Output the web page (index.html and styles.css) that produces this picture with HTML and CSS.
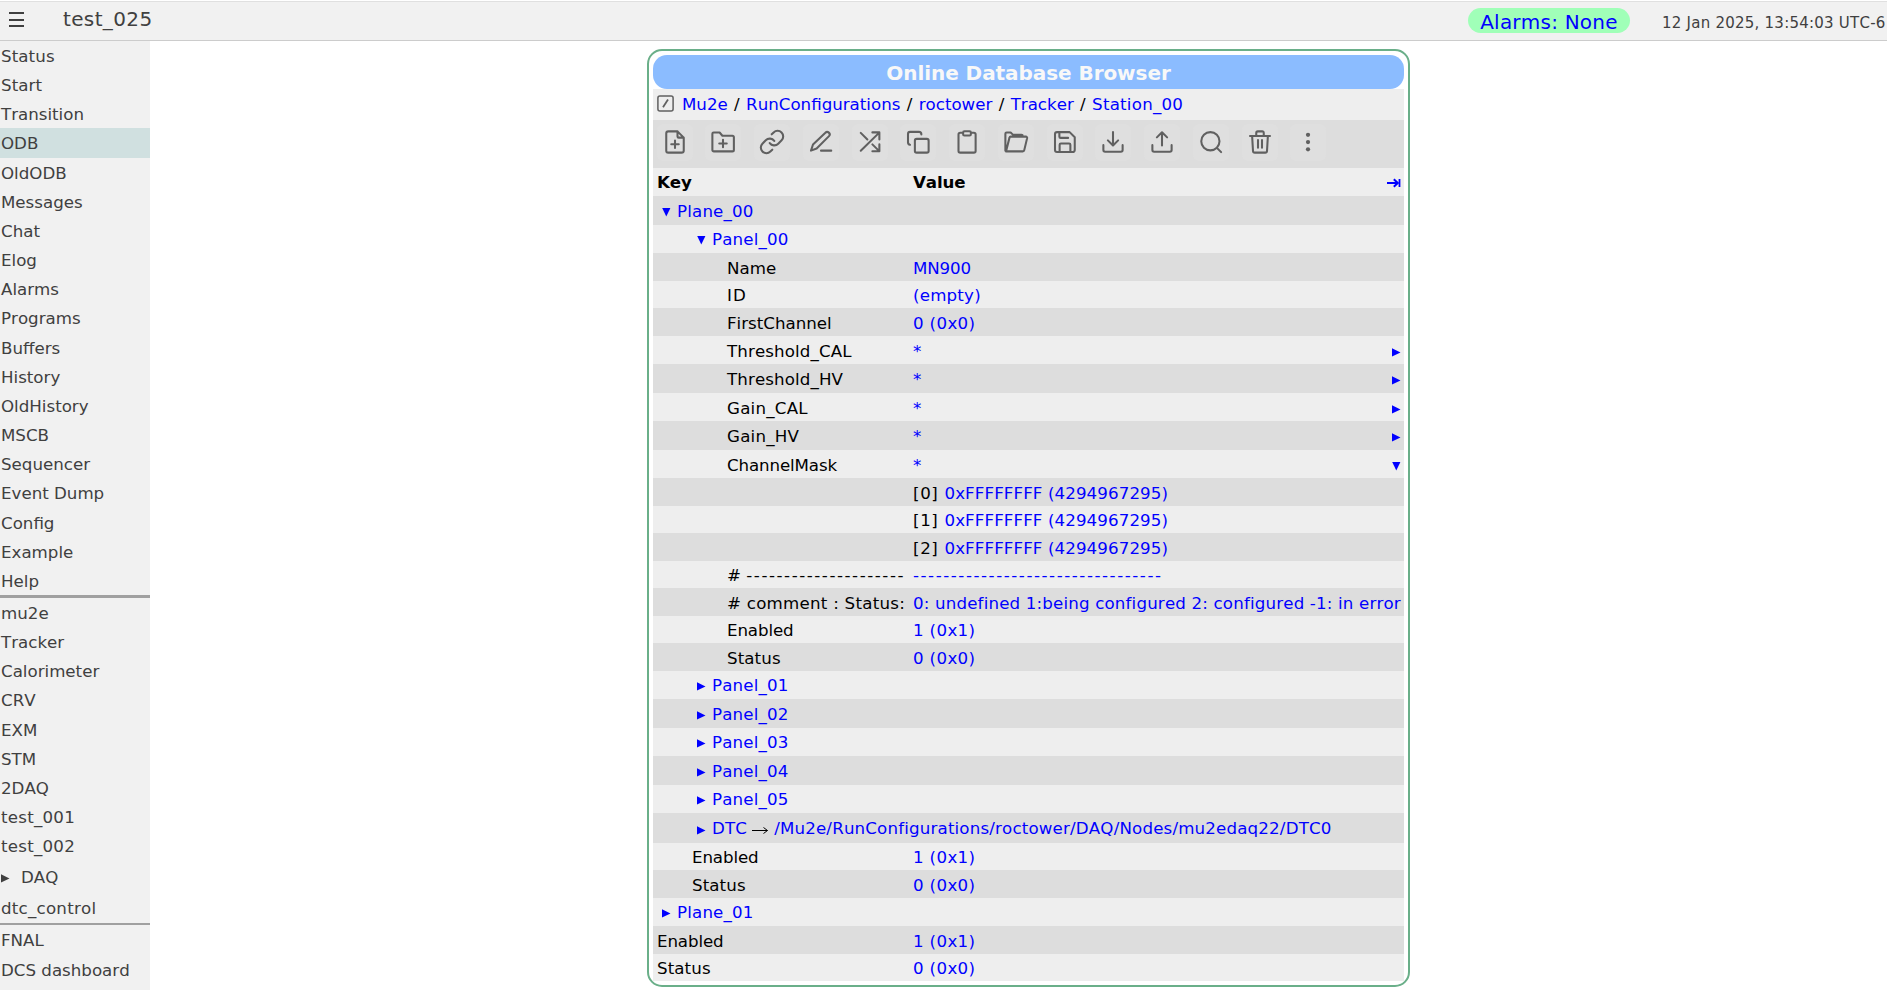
FILE: index.html
```html
<!DOCTYPE html>
<html lang="en">
<head>
<meta charset="utf-8">
<title>test_025 - Online Database Browser</title>
<link rel="stylesheet" href="styles.css">
</head>
<body>
<header class="topbar">
  <span class="menu-icon"><svg width="16" height="16" viewBox="0 0 16 16"><path d="M0 1h15M0 8h15M0 14h15" stroke="#404040" stroke-width="1.8"/></svg></span>
  <span class="experiment">test_025</span>
  <span class="alarms">Alarms: None</span>
  <span class="clock">12 Jan 2025, 13:54:03 UTC-6</span>
</header>
<div class="page">
<nav class="sidebar">
  <a class="item cap-s">Status</a>
  <a class="item cap-s">Start</a>
  <a class="item">Transition</a>
  <a class="item current">ODB</a>
  <a class="item">OldODB</a>
  <a class="item">Messages</a>
  <a class="item">Chat</a>
  <a class="item">Elog</a>
  <a class="item">Alarms</a>
  <a class="item">Programs</a>
  <a class="item">Buffers</a>
  <a class="item">History</a>
  <a class="item">OldHistory</a>
  <a class="item">MSCB</a>
  <a class="item">Sequencer</a>
  <a class="item">Event Dump</a>
  <a class="item">Config</a>
  <a class="item">Example</a>
  <a class="item">Help</a>
  <div class="rule thick"></div>
  <a class="item">mu2e</a>
  <a class="item">Tracker</a>
  <a class="item">Calorimeter</a>
  <a class="item">CRV</a>
  <a class="item">EXM</a>
  <a class="item">STM</a>
  <a class="item">2DAQ</a>
  <a class="item under">test_001</a>
  <a class="item under">test_002</a>
  <a class="item group"><svg class="tri" width="9" height="9" viewBox="0 0 9 9"><path d="M0 .3L8.5 4.4 0 8.5z"/></svg>DAQ</a>
  <a class="item under">dtc_control</a>
  <div class="rule"></div>
  <a class="item">FNAL</a>
  <a class="item last">DCS dashboard</a>
</nav>
<main class="main">
<section class="card">
  <h1 class="title">Online Database Browser</h1>
  <div class="path">
    <svg class="root" width="17" height="17" viewBox="0 0 17 17" fill="none" stroke="#606060" stroke-width="1.5"><rect x=".9" y=".9" width="15.2" height="15.2" rx="2"/><path d="M6 12.3L11 4.5" stroke-width="1.8"/></svg>
    <a>Mu2e</a><i>/</i><a>RunConfigurations</a><i>/</i><a>roctower</a><i>/</i><a>Tracker</a><i>/</i><a class="under">Station_00</a>
  </div>
  <div class="toolbar">
    <span class="tool"><svg viewBox="0 0 24 24"><path d="M14 3.5v4a1 1 0 0 0 1 1h4M17.2 20.5H6.6a1.6 1.6 0 0 1-1.6-1.6V5.1a1.6 1.6 0 0 1 1.6-1.6H14l5 5v10.2a1.8 1.8 0 0 1-1.8 1.8zM12 10.8v6M9 13.8h6"/></svg></span>
    <span class="tool"><svg viewBox="0 0 24 24"><path d="M3.5 18.3V5.4a1 1 0 0 1 1-1H9.3L11.5 7h8a1.2 1.2 0 0 1 1.2 1.2v10.1a1.2 1.2 0 0 1-1.2 1.2H4.7a1.2 1.2 0 0 1-1.2-1.2zM12 10.2v6M9 13.2h6"/></svg></span>
    <span class="tool"><svg viewBox="0 0 24 24"><g transform="translate(1.2 1.2) scale(.9)" stroke-width="1.85"><path d="M10 13a5 5 0 0 0 7.54.54l3-3a5 5 0 0 0-7.07-7.07l-1.72 1.71M14 11a5 5 0 0 0-7.54-.54l-3 3a5 5 0 0 0 7.07 7.07l1.71-1.71"/></g></svg></span>
    <span class="tool"><svg viewBox="0 0 24 24"><path d="M4 18.9l1.6-4.9 9.9-9.4a1.9 1.9 0 0 1 2.9 2.7L8.5 17.2zM12 18.9h8.2"/></svg></span>
    <span class="tool"><svg viewBox="0 0 24 24"><path d="M4.6 19L19.4 4.5M13.9 4.3h5.6v5.6M4.6 4.7l5.3 5.3M13.9 13.9l5.5 5.4M19.5 13.8v5.6h-5.6"/></svg></span>
    <span class="tool"><svg viewBox="0 0 24 24"><rect x="9.5" y="9.5" width="11" height="11" rx="1.4"/><path d="M5.6 14.2A2 2 0 0 1 4 12.3V5.5A1.6 1.6 0 0 1 5.6 3.9h7.1A2 2 0 0 1 14.7 5.9"/></svg></span>
    <span class="tool"><svg viewBox="0 0 24 24"><path d="M9 4.6H6.6A1.4 1.4 0 0 0 5.2 6v13.1a1.4 1.4 0 0 0 1.4 1.4h10.9a1.4 1.4 0 0 0 1.4-1.4V6a1.4 1.4 0 0 0-1.4-1.4H15M9.9 3.4h4.2a1 1 0 0 1 1 1v1.4a1 1 0 0 1-1 1H9.9a1 1 0 0 1-1-1V4.4a1 1 0 0 1 1-1z"/></svg></span>
    <span class="tool"><svg viewBox="0 0 24 24"><path d="M3.5 19V5.4a1 1 0 0 1 1-1H7.7l2 1.9h6.7a1 1 0 0 1 1 1v.3M4 19.5L6.8 8.5a1 1 0 0 1 1-.8H19.9a1 1 0 0 1 1 1.2L18.6 18.5a1.2 1.2 0 0 1-1.2 1H4z"/></svg></span>
    <span class="tool"><svg viewBox="0 0 24 24"><path d="M5.6 4.1H15.7L19.8 8.2V18.4a1.6 1.6 0 0 1-1.6 1.6H5.6A1.6 1.6 0 0 1 4 18.4V5.7a1.6 1.6 0 0 1 1.6-1.6zM7.7 20V14.2a1 1 0 0 1 1-1h6.6a1 1 0 0 1 1 1V20M7.5 4.1V7.7a1 1 0 0 0 1 1H14.5"/></svg></span>
    <span class="tool"><svg viewBox="0 0 24 24"><path d="M4.3 14.5v3.9a1.4 1.4 0 0 0 1.4 1.4h12.6a1.4 1.4 0 0 0 1.4-1.4v-3.9M12 4.1v10.5M7.9 10.7l4.1 4.1 4.1-4.1"/></svg></span>
    <span class="tool"><svg viewBox="0 0 24 24"><path d="M4.3 14.5v3.9a1.4 1.4 0 0 0 1.4 1.4h12.6a1.4 1.4 0 0 0 1.4-1.4v-3.9M12 14.8V4.3M7.9 8.3L12 4.2l4.1 4.1"/></svg></span>
    <span class="tool"><svg viewBox="0 0 24 24"><circle cx="11.5" cy="11.4" r="7.3"/><path d="M16.7 16.7l3.4 3.4"/></svg></span>
    <span class="tool"><svg viewBox="0 0 24 24"><path d="M4 7.2h16M9 7V4.7a1.2 1.2 0 0 1 1.2-1.2h3.6A1.2 1.2 0 0 1 15 4.7V7M5.7 7.2l.7 12a1.4 1.4 0 0 0 1.4 1.3h8.4a1.4 1.4 0 0 0 1.4-1.3l.7-12M10.4 10.5v6M13.6 10.5v6"/></svg></span>
    <span class="tool"><svg viewBox="0 0 24 24"><g fill="#606060" stroke="none"><circle cx="12" cy="6.2" r="1.7"/><circle cx="12" cy="12" r="1.7"/><circle cx="12" cy="17.8" r="1.7"/></g></svg></span>
  </div>
  <div class="row head"><span class="key">Key</span><span class="val">Value</span><span class="more"><svg width="14" height="10" viewBox="0 0 14 10" fill="none" stroke="#0000ff"><path d="M0 5h11" stroke-width="2"/><path d="M6.8 1.2L10.8 5 6.8 8.8" stroke-width="2"/><path d="M12.5 1v8" stroke-width="1.8"/></svg></span></div>
  <div class="row dark h29 low"><a class="key l0"><svg class="tri" width="9" height="9" viewBox="0 0 9 9"><path d="M.2 0h8.2L4.3 8.5z"/></svg>Plane_00</a></div>
  <div class="row h28"><a class="key l1"><svg class="tri" width="9" height="9" viewBox="0 0 9 9"><path d="M.2 0h8.2L4.3 8.5z"/></svg>Panel_00</a></div>
  <div class="row dark h28 low"><span class="key l2">Name</span><a class="val tight">MN900</a></div>
  <div class="row h27"><span class="key l2 serif-i">ID</span><a class="val empty">(empty)</a></div>
  <div class="row dark h28 low"><span class="key l2">FirstChannel</span><a class="val num">0 (0x0)</a></div>
  <div class="row h28 low"><span class="key l2 long">Threshold_CAL</span><a class="val">*</a><span class="more"><svg class="tri" width="9" height="9" viewBox="0 0 9 9"><path d="M0 .3L8.5 4.4 0 8.5z"/></svg></span></div>
  <div class="row dark h29 low"><span class="key l2 long">Threshold_HV</span><a class="val">*</a><span class="more"><svg class="tri" width="9" height="9" viewBox="0 0 9 9"><path d="M0 .3L8.5 4.4 0 8.5z"/></svg></span></div>
  <div class="row h28 low"><span class="key l2 under">Gain_CAL</span><a class="val">*</a><span class="more"><svg class="tri" width="9" height="9" viewBox="0 0 9 9"><path d="M0 .3L8.5 4.4 0 8.5z"/></svg></span></div>
  <div class="row dark h29 low"><span class="key l2 under">Gain_HV</span><a class="val">*</a><span class="more"><svg class="tri" width="9" height="9" viewBox="0 0 9 9"><path d="M0 .3L8.5 4.4 0 8.5z"/></svg></span></div>
  <div class="row h28 low"><span class="key l2 tight">ChannelMask</span><a class="val">*</a><span class="more"><svg class="tri" width="9" height="9" viewBox="0 0 9 9"><path d="M.2 0h8.2L4.3 8.5z"/></svg></span></div>
  <div class="row dark h28 low"><span class="key"></span><span class="val"><b class="idx">[0] </b><a class="hex">0xFFFFFFFF (4294967295)</a></span></div>
  <div class="row h27"><span class="key"></span><span class="val"><b class="idx">[1] </b><a class="hex">0xFFFFFFFF (4294967295)</a></span></div>
  <div class="row dark h28 low"><span class="key"></span><span class="val"><b class="idx">[2] </b><a class="hex">0xFFFFFFFF (4294967295)</a></span></div>
  <div class="row h27"><span class="key l2"># <span class="dash">---------------------</span></span><a class="val dash">---------------------------------</a></div>
  <div class="row dark h28 low"><span class="key l2 comment"># comment : Status:</span><a class="val note">0: undefined 1:being configured 2: configured -1: in error</a></div>
  <div class="row h27"><span class="key l2 tight">Enabled</span><a class="val num">1 (0x1)</a></div>
  <div class="row dark h28 low"><span class="key l2 cap-s">Status</span><a class="val num">0 (0x0)</a></div>
  <div class="row h28"><a class="key l1"><svg class="tri" width="9" height="9" viewBox="0 0 9 9"><path d="M0 .3L8.5 4.4 0 8.5z"/></svg>Panel_01</a></div>
  <div class="row dark h29 low"><a class="key l1"><svg class="tri" width="9" height="9" viewBox="0 0 9 9"><path d="M0 .3L8.5 4.4 0 8.5z"/></svg>Panel_02</a></div>
  <div class="row h28"><a class="key l1"><svg class="tri" width="9" height="9" viewBox="0 0 9 9"><path d="M0 .3L8.5 4.4 0 8.5z"/></svg>Panel_03</a></div>
  <div class="row dark h29 low"><a class="key l1"><svg class="tri" width="9" height="9" viewBox="0 0 9 9"><path d="M0 .3L8.5 4.4 0 8.5z"/></svg>Panel_04</a></div>
  <div class="row h28"><a class="key l1"><svg class="tri" width="9" height="9" viewBox="0 0 9 9"><path d="M0 .3L8.5 4.4 0 8.5z"/></svg>Panel_05</a></div>
  <div class="row dark h30 low"><a class="key l1 target"><svg class="tri" width="9" height="9" viewBox="0 0 9 9"><path d="M0 .3L8.5 4.4 0 8.5z"/></svg><span>DTC</span><svg class="link-arrow" width="17" height="8" viewBox="0 0 17 8" fill="none" stroke="#000"><path d="M0 4.5h15.5M11.500 1.500L15.500 4.500l-4 3" stroke-width="1"/></svg><span>/Mu2e/RunConfigurations/roctower/DAQ/Nodes/mu2edaq22/DTC0</span></a></div>
  <div class="row h27"><span class="key l1b tight">Enabled</span><a class="val num">1 (0x1)</a></div>
  <div class="row dark h28 low"><span class="key l1b cap-s">Status</span><a class="val num">0 (0x0)</a></div>
  <div class="row h28"><a class="key l0"><svg class="tri" width="9" height="9" viewBox="0 0 9 9"><path d="M0 .3L8.5 4.4 0 8.5z"/></svg>Plane_01</a></div>
  <div class="row dark h28 low"><span class="key tight">Enabled</span><a class="val num">1 (0x1)</a></div>
  <div class="row h27"><span class="key cap-s">Status</span><a class="val num">0 (0x0)</a></div>
</section>
</main>
</div>
</body>
</html>
```
FILE: styles.css
```css
* { box-sizing: border-box; }
html, body { height: 100%; overflow: hidden; }
body {
  margin: 0;
  padding-top: 1px;
  background: #fff;
  font-family: Verdana, "DejaVu Sans", sans-serif;
  font-size: 16.67px;
  font-kerning: none;
  color: #000;
}
a { color: #00f; text-decoration: none; }

.topbar {
  height: 40px;
  border-top: 1px solid #e0e0e0;
  border-bottom: 1px solid #ccc;
  background: #f1f1f1;
  color: #404040;
  display: flex;
  white-space: nowrap;
}
.menu-icon { flex: none; width: 63px; padding: 10px 0 0 9px; }
.experiment { flex: none; font-size: 20px; line-height: 35px; letter-spacing: .018em; width: 1405px; }
.alarms {
  flex: none;
  width: 162px;
  height: 25px;
  margin-top: 6px;
  border-radius: 13px;
  background: #a0ffb8;
  color: #00f;
  font-size: 20px;
  line-height: 29px;
  letter-spacing: .011em;
  text-align: center;
}
.clock { flex: none; margin-left: 32px; font-size: 15px; line-height: 43px; letter-spacing: .016em; }

.page { display: flex; height: 949px; }
.sidebar { width: 150px; background: #f1f1f1; flex: none; }
.item {
  display: block;
  height: 29.17px;
  line-height: 31.5px;
  padding-left: 1px;
  color: #404040;
  white-space: nowrap;
}
.current { background: #d0e0e0; }
.group { display: flex; align-items: center; height: 33px; line-height: 33px; padding-top: 2px; }
.group .tri { margin: 1px 11px 0 0; fill: #404040; }
.last { height: 31px; line-height: 33px; }
.rule { height: 2px; background: #a0a0a0; }
.thick { height: 3px; }

.main { flex: 1; }
.card {
  width: 763px;
  height: 938px;
  margin: 8px 0 0 497px;
  border: 2px solid #6aaf89;
  border-radius: 15px;
  padding: 4px;
}
.title {
  margin: 0;
  height: 34px;
  border-radius: 14px;
  background: #8bbcff;
  color: #f8f8f8;
  font-size: 20px;
  font-weight: bold;
  line-height: 36px;
  letter-spacing: -.003em;
  text-align: center;
}
.path {
  display: flex;
  height: 31px;
  line-height: 32px;
  padding-left: 4px;
  background: #eee;
}
.root { margin: 6px 8px 0 0; }
.path i { font-style: normal; width: 18.3px; text-align: center; }
.toolbar {
  display: flex;
  gap: 12.77px;
  height: 48px;
  padding: 4px 0 0 3.5px;
  background: #ddd;
}
.tool {
  width: 36px;
  height: 36.5px;
  padding: 3px;
  border-radius: 6px;
  background: #dfdfdf;
}
.tool svg {
  display: block;
  width: 30px;
  height: 30px;
  fill: none;
  stroke: #606060;
  stroke-width: 1.65;
  stroke-linecap: round;
  stroke-linejoin: round;
}

.row {
  display: flex;
  line-height: 29px;
  padding-left: 4px;
  background: #eee;
  white-space: nowrap;
}
.dark { background: #ddd; }
.head { height: 28px; font-weight: bold; line-height: 29px; letter-spacing: -.005em; }
.h27 { height: 27px; }
.h28 { height: 28px; }
.h29 { height: 29px; }
.h30 { height: 30px; }
.low { padding-top: 1px; }
.key { width: 256px; flex: none; }
.val { flex: 1; }
.l0 { padding-left: 5px; letter-spacing: .01em; }
.l1 { padding-left: 40px; letter-spacing: .01em; }
.l1b { padding-left: 35px; }
.l2 { padding-left: 70px; }
.tri { flex: none; fill: #00f; }
.key .tri { margin-right: 6px; }
.more { padding-right: 3px; }
.target { display: flex; align-items: center; height: 29px; }
.target .tri { margin-top: 3px; }
.link-arrow { flex: none; margin: 2px 5px 0; }

/* tracking by kind of text */
.num { letter-spacing: .021em; }
.empty { letter-spacing: .012em; }
.hex { letter-spacing: .006em; }
.idx { font-weight: normal; letter-spacing: .038em; }
.dash { letter-spacing: .093em; }
.note { letter-spacing: .01em; }
.comment { letter-spacing: .015em; }
.under { letter-spacing: .014em; }
.long { letter-spacing: .007em; }
.cap-s { letter-spacing: .006em; }
.serif-i { letter-spacing: .06em; }
.tight { letter-spacing: -.007em; }
```
